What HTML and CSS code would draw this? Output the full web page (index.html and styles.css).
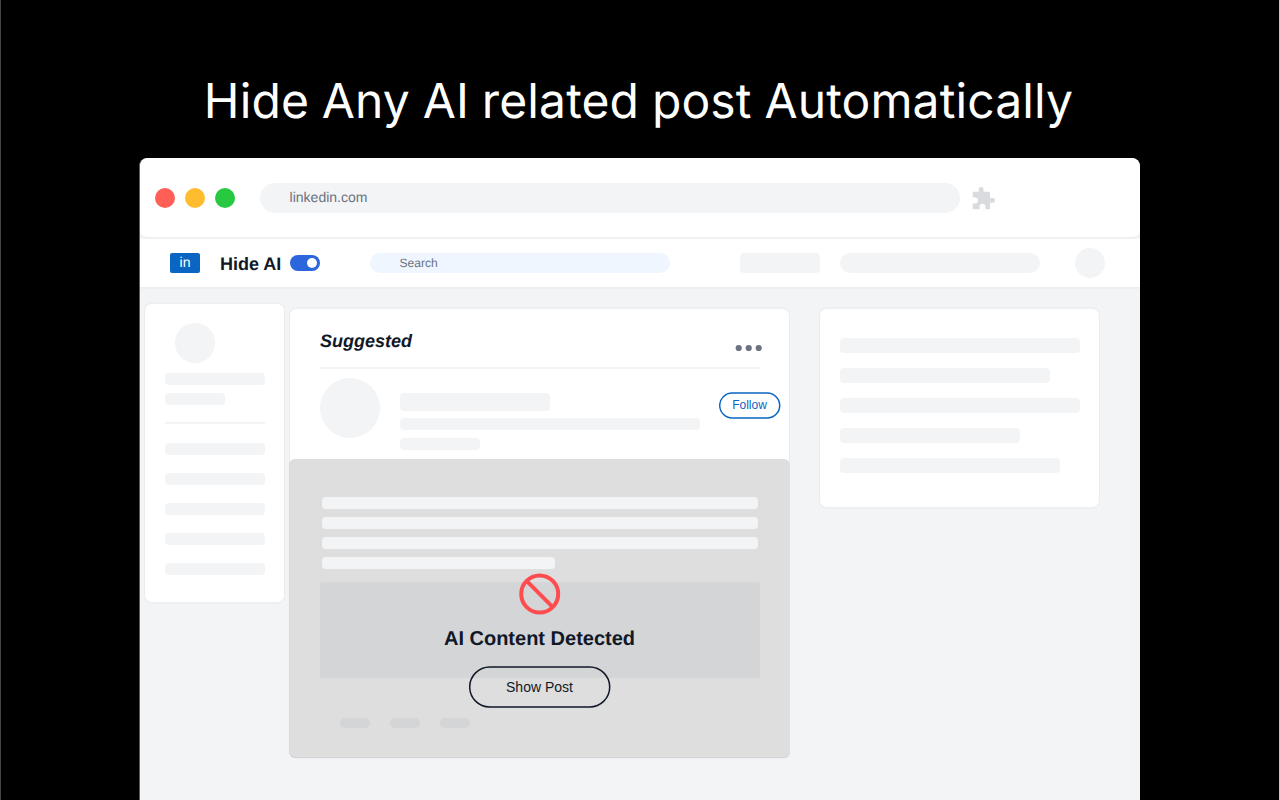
FILE: index.html
```html
<!DOCTYPE html>
<html lang="en">
<head>
<meta charset="utf-8">
<title>Hide AI</title>
<link rel="stylesheet" href="styles.css">
</head>
<body>
<main class="stage">
  <h1 class="headline">Hide Any AI related post Automatically</h1>
  <section class="window">
    <header class="chrome">
      <div class="lights"><i class="light red"></i><i class="light yellow"></i><i class="light green"></i></div>
      <div class="address">linkedin.com</div>
      <svg class="puzzle" width="26" height="26" viewBox="0.3 0 26 26"><path fill="#d9dbdf" d="M2 6.500Q2 5.700 2.800 5.700H8V3.300a2.400 2.400 0 0 1 4.800 0V5.700H18.400Q19.300 5.700 19.300 6.600V12H22a2.400 2.400 0 0 1 0 4.800H19.300V22.400Q19.300 23.300 18.400 23.300H14.700V20.600a2.900 2.900 0 0 0-5.800 0V23.300H2.800Q2 23.300 2 22.400V17.400H4.400a2.900 2.900 0 0 0 0-5.800H2Z"/></svg>
    </header>
    <nav class="nav">
      <span class="logo">in</span>
      <span class="brand">Hide AI</span>
      <span class="toggle"><i class="knob"></i></span>
      <span class="search">Search</span>
      <i class="skel nav-a"></i>
      <i class="skel nav-b"></i>
      <i class="skel avatar-nav"></i>
    </nav>
    <div class="content">
      <aside class="card profile">
        <i class="skel avatar-profile"></i>
        <i class="skel line"></i>
        <i class="skel line short"></i>
        <i class="rule"></i>
        <div class="links"><i class="skel line"></i><i class="skel line"></i><i class="skel line"></i><i class="skel line"></i><i class="skel line"></i></div>
      </aside>
      <article class="card post">
        <div class="post-head">
          <h2 class="suggested">Suggested</h2>
          <svg class="dots" width="28" height="8" viewBox="0 0 28 8" fill="#6b7280"><circle cx="3.700" cy="4" r="3.100"/><circle cx="13.700" cy="4" r="3.100"/><circle cx="23.700" cy="4" r="3.100"/></svg>
        </div>
        <div class="author">
          <i class="skel avatar-author"></i>
          <div class="author-lines"><i class="skel name"></i><i class="skel line role"></i><i class="skel line time"></i></div>
          <button class="follow"><svg class="outline" width="62" height="28" viewBox="0 0 62 28"><rect x="0.700" y="1" width="60" height="25" rx="12.500"/></svg>Follow</button>
        </div>
        <div class="hidden-post">
          <div class="body-lines"><i class="skel line"></i><i class="skel line"></i><i class="skel line"></i><i class="skel line last"></i></div>
          <div class="media"></div>
          <div class="chips"><i class="chip"></i><i class="chip"></i><i class="chip"></i></div>
          <div class="notice">
            <svg class="ban" width="42" height="42" viewBox="0 0 42 42" fill="none" stroke="#ff4d4f" stroke-width="4"><circle cx="20.700" cy="21" r="18.500"/><path d="M7.600 7.900 33.800 34.100"/></svg>
            <strong class="detected">AI Content Detected</strong>
            <button class="show"><svg class="outline" width="142" height="42" viewBox="0 0 142 42"><rect x="0.700" y="1" width="140" height="40" rx="20"/></svg>Show Post</button>
          </div>
        </div>
      </article>
      <aside class="card news">
        <i class="skel w240"></i><i class="skel w210"></i><i class="skel w240"></i><i class="skel w180"></i><i class="skel w220"></i>
      </aside>
    </div>
  </section>
</main>
</body>
</html>
```
FILE: styles.css
```css
* { box-sizing: border-box; }
body { margin: 0; font-family: "Liberation Sans", Arial, sans-serif; color: #111827; text-rendering: geometricPrecision; }
i { display: block; font-style: normal; }
svg { display: block; }
button { position: relative; border: 0; background: none; padding: 0; font-family: inherit; }
.outline { position: absolute; inset: 0; fill: none; stroke: currentColor; stroke-width: 1.5; }
.stage { width: 1280px; height: 800px; overflow: hidden; background: #000; border-left: 1px solid #444; border-right: 1px solid #c8c8c8; }
.headline { margin: 0; height: 158px; padding: 72px 3px 0 0; font: 400 48px/58px Inter, sans-serif; letter-spacing: .12px; word-spacing: -.8px; color: #fff; text-align: center; white-space: nowrap; }
.window { width: 1001px; height: 642px; margin-left: 138px; border-left: 1px solid #5c5d5e; border-radius: 8px 8px 0 0; background: #f3f4f6; overflow: hidden; }
.chrome { height: 81px; padding: 0 0 0 15px; display: flex; align-items: center; background: #fff; border-bottom: 2px solid #f0f1f3; border-radius: 8px; }
.lights { display: flex; gap: 10px; }
.light { width: 20px; height: 20px; border-radius: 50%; }
.red { background: #ff5f57; }
.yellow { background: #febc2e; }
.green { background: #28c840; }
.address { width: 700px; height: 30px; margin-left: 25px; padding-left: 29.6px; border-radius: 15px; background: #f3f4f6; color: #6b7280; font-size: 14px; line-height: 29px; }
.puzzle { align-self: flex-start; margin: 28px 0 0 11px; }
.nav { height: 50px; padding-left: 30px; display: flex; align-items: center; background: #fff; border-bottom: 2px solid #eeeff1; }
.logo { width: 30px; height: 20px; border-radius: 2px; background: #0a66c2; color: #fff; font-size: 14px; line-height: 19px; text-align: center; }
.brand { width: 70px; padding: 1px 0 0 20px; box-sizing: content-box; font-size: 18px; font-weight: 700; line-height: 20px; }
.toggle { width: 30px; height: 16px; padding: 3px; border-radius: 8px; background: #2b66dd; }
.knob { width: 10px; height: 10px; margin-left: 14px; border-radius: 50%; background: #fff; }
.search { width: 300px; height: 20px; margin-left: 50px; padding-left: 29.6px; border-radius: 10px; background: #eff6ff; color: #6b7280; font-size: 12px; line-height: 20px; }
.skel { background: #f3f4f6; border-radius: 4px; }
.nav-a { width: 80px; height: 20px; margin-left: 70px; }
.nav-b { width: 200px; height: 20px; margin-left: 20px; border-radius: 10px; }
.avatar-nav { width: 30px; height: 30px; margin-left: 35px; border-radius: 50%; }
.content { padding: 13px 0 0 4px; display: flex; align-items: flex-start; }
.card { background: #fff; border: solid #eeeff2; border-width: 2px 1px; border-left-color: #e9ebee; border-right-color: #e9ebee; border-radius: 8px; }
.line { width: 100px; height: 12px; }
.profile { width: 141px; height: 302px; padding: 19px 20px; }
.avatar-profile { width: 40px; height: 40px; margin: 0 0 10px 10px; border-radius: 50%; }
.short { width: 60px; margin-top: 8px; }
.rule { width: 100px; height: 2px; margin: 17px 0 19px; background: #f3f4f6; }
.links { display: grid; gap: 18px; }
.post { width: 501px; height: 452px; margin: 5px 0 0 4px; }
.post-head { width: 440px; height: 60px; margin: 0 0 0 30px; display: flex; justify-content: space-between; border-bottom: 2px solid #f3f4f6; }
.suggested { margin: 22px 0 0; font-size: 18px; font-style: italic; line-height: 21px; }
.dots { margin: 35px -3px 0 0; }
.author { height: 90px; padding: 9px 0 0 30px; display: flex; align-items: flex-start; }
.avatar-author { width: 60px; height: 60px; border-radius: 50%; }
.author-lines { width: 300px; margin: 15px 0 0 20px; }
.name { width: 150px; height: 18px; }
.role { width: 300px; margin-top: 7px; }
.time { width: 80px; margin-top: 8px; }
.follow { width: 61px; height: 27px; margin: 14px 0 0 19px; color: #0a66c2; font-size: 12px; line-height: 27px; }
.hidden-post { position: relative; width: 501px; height: 299px; margin-left: -1px; padding: 38px 0 0 32px; background: #dedede; border-bottom: 1px solid #d2d3d5; border-left: 1px solid #d6d7d9; border-radius: 6px; }
.body-lines { display: grid; gap: 8px; }
.body-lines .line { width: 436px; }
.body-lines .last { width: 233px; }
.media { width: 440px; height: 96px; margin: 13px 0 0 -2px; border-radius: 3px; background: #d4d5d7; }
.chips { display: flex; gap: 20px; margin: 40px 0 0 18px; }
.chip { width: 30px; height: 10px; border-radius: 5px; background: #d4d5d7; }
.notice { position: absolute; inset: 114px 0 0 -1px; display: flex; flex-direction: column; align-items: center; }
.detected { margin-top: 12px; font-size: 20px; line-height: 24px; }
.show { width: 142px; height: 42px; margin-top: 15px; color: #111827; font-size: 14px; line-height: 42px; }
.news { width: 281px; height: 202px; margin: 5px 0 0 29px; padding: 29px 20px; display: grid; gap: 15px; align-content: start; }
.news .skel { height: 15px; }
.w240 { width: 240px; }
.w210 { width: 210px; }
.w180 { width: 180px; }
.w220 { width: 220px; }
```
